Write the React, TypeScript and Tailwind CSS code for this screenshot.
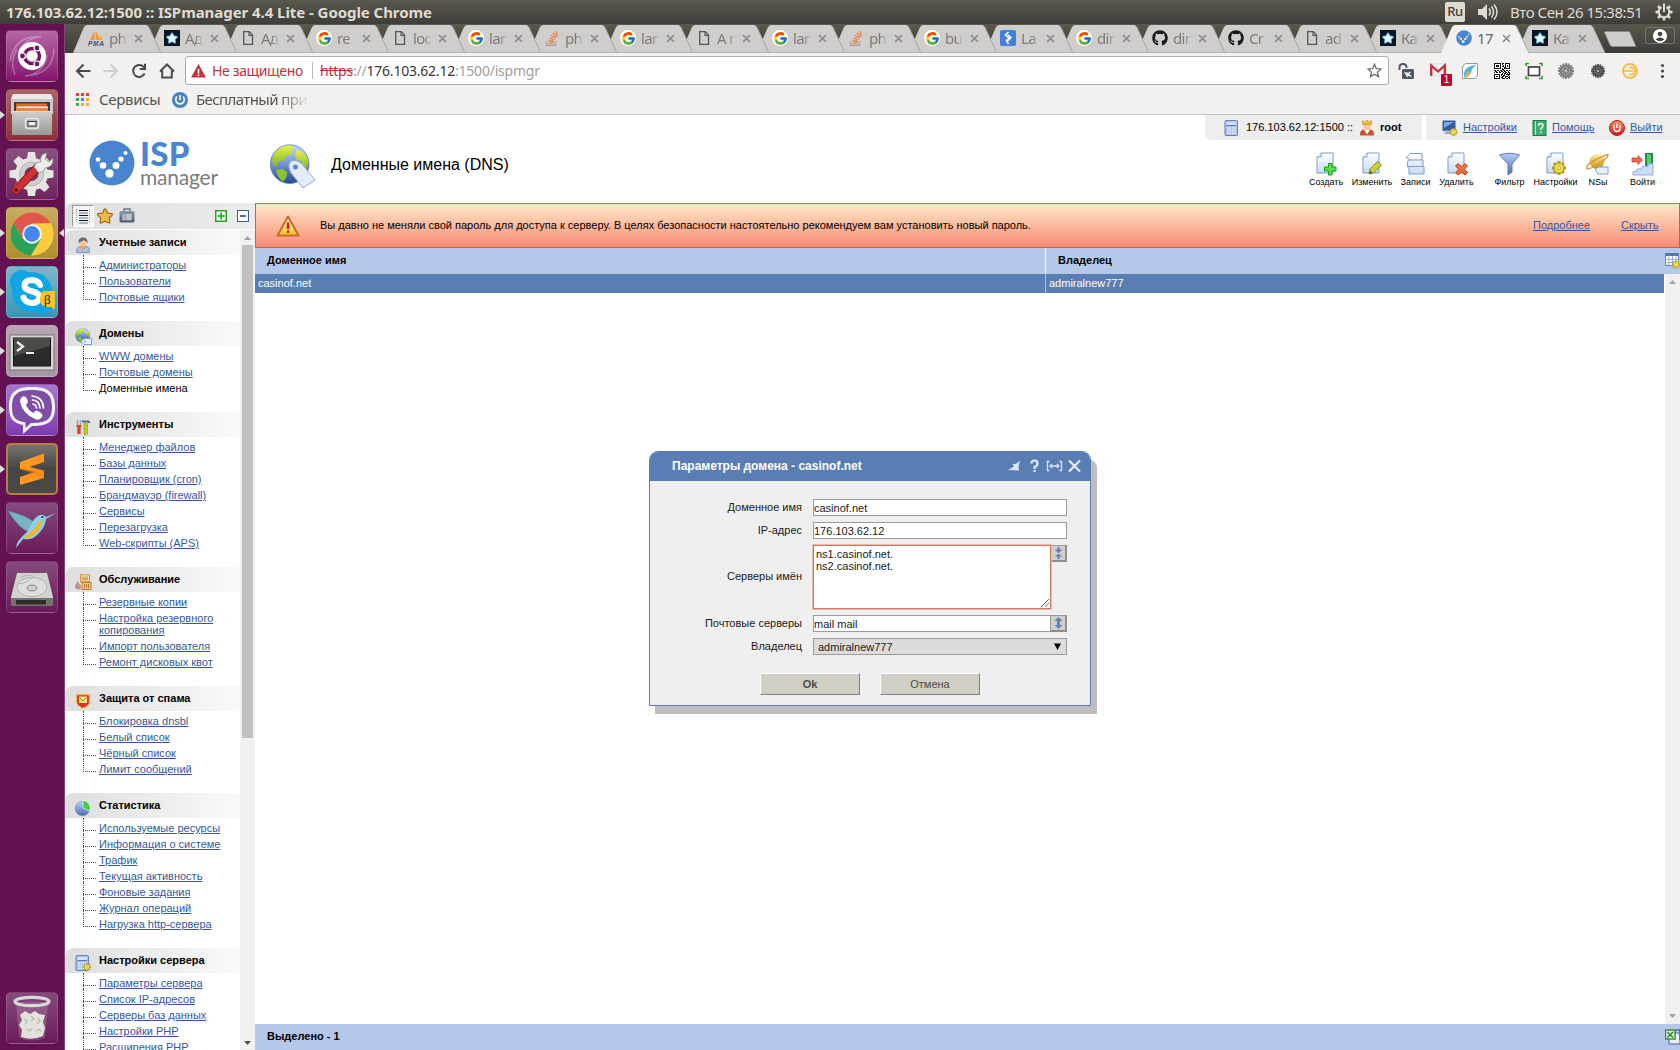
import React from "react";
import { FcGoogle } from "react-icons/fc";
import { FaGithub, FaStackOverflow, FaStar } from "react-icons/fa";

type Kids = { children?: React.ReactNode };

/* ---------- shared gradients ---------- */
const grads: [string, string, string][] = [
  ["gPage", "#ffffff", "#c9daf5"],
  ["gBlue", "#b9d0f6", "#4a6cb8"],
  ["gGlobe", "#c4dcff", "#24489c"],
  ["gLime", "#e6f04a", "#7cb822"],
  ["gRed", "#ff8f70", "#c81818"],
  ["gGold", "#fff2a8", "#c98a14"],
  ["gWarn", "#fffbd0", "#f2c21c"],
  ["gMetal", "#fdfdfd", "#9a9a9a"],
  ["gDrawer", "#cfcfcd", "#979795"],
  ["gGray", "#8f9aa8", "#4f5a69"],
];
const Defs = () => (
  <svg className="absolute h-0 w-0">
    <defs>
      {grads.map(([id, a, b]) => (
        <linearGradient key={id} id={id} x1="0" y1="0" x2="0" y2="1">
          <stop offset="0" stopColor={a} />
          <stop offset="1" stopColor={b} />
        </linearGradient>
      ))}
    </defs>
  </svg>
);

const I = ({ s = 16, v = 16, children }: Kids & { s?: number; v?: number }) => (
  <svg width={s} height={s} viewBox={`0 0 ${v} ${v}`} className="shrink-0 overflow-visible">
    {children}
  </svg>
);

/* ---------- tab icons ---------- */
const IspDot = ({ s = 16 }: { s?: number }) => (
  <I s={s} v={46}>
    <circle cx="23" cy="23" r="22.500" fill="#4a86cf" />
    <g fill="#fff">
      <circle cx="9" cy="19.500" r="2.300" />
      <circle cx="14" cy="25.500" r="3.300" />
      <circle cx="20.500" cy="33.500" r="4.200" />
      <circle cx="27" cy="25.500" r="3.500" />
      <circle cx="32" cy="19" r="2.600" />
      <circle cx="36.500" cy="13" r="2" />
    </g>
  </I>
);
const PageFav = () => (
  <I>
    <path d="M3.700 1.700h5.600l3.200 3.200v9.400H3.700z" fill="none" stroke="#555" strokeWidth="1.300" />
    <path d="M9 2v3.300h3.300" fill="none" stroke="#555" strokeWidth="1.200" />
  </I>
);
const StarFav = () => (
  <span className="flex h-4 w-4 items-center justify-center bg-[#0b1420]">
    <FaStar size={12} color="#e6f7ff" stroke="#3aa4e0" strokeWidth={40} />
  </span>
);
const GFav = () => (
  <span className="flex h-4 w-4 items-center justify-center rounded-full bg-white">
    <FcGoogle size={15} />
  </span>
);
const PmaFav = () => (
  <I>
    <path d="M2 10Q4 4 6.500 2v8zM7.500 10V1q4 4 3.500 9zM11.500 10l1-5q1.500 3 1.500 5z" fill="#f39a35" />
    <text x="0" y="15.800" fontSize="6.500" fontWeight="bold" fontStyle="italic" fill="#4a4a78" fontFamily="Liberation Sans" textLength="16">
      PMA
    </text>
  </I>
);
const LaFav = () => (
  <I>
    <rect width="16" height="16" rx="2" fill="#4281d8" />
    <path d="M8.500 2L5.500 5l3.500 3-3 3M8 5l3 2.500L7 11.500 8.500 14" fill="none" stroke="#fff" strokeWidth="1.500" />
  </I>
);
/* fanned sheets above an open tray */
const SoFav = () => (
  <I>
    <path d="M2.500 11.500V15.300H11.500V11.500" fill="none" stroke="#a8a19a" strokeWidth="1.300" />
    <path d="M4.300 13.200H9.800M4.400 10.700l5.500.8M5.200 8l5.200 2M6.800 5.200l4.500 3.400M9 2.700l3.300 4.500M12 1l1.300 5.300" stroke="#e8803c" strokeWidth="1.300" fill="none" />
  </I>
);
const favs: Record<string, React.ReactNode> = {
  pma: <PmaFav />,
  star: <StarFav />,
  page: <PageFav />,
  g: <GFav />,
  so: <SoFav />,
  la: <LaFav />,
  gh: <FaGithub size={16} color="#1b1b1b" />,
  isp: <IspDot />,
};
const tabs: [string, string][] = [
  ["pma", "ph"], ["star", "Ад"], ["page", "Ад"], ["g", "re"], ["page", "loc"], ["g", "lar"], ["so", "ph"],
  ["g", "lar"], ["page", "A r"], ["g", "lar"], ["so", "ph"], ["g", "bu"], ["la", "La"], ["g", "dir"],
  ["gh", "dir"], ["gh", "Cr"], ["page", "ad"], ["star", "Ка"], ["isp", "17"], ["star", "Ка"],
];

const Tab = ({ i, icon, text }: { i: number; icon: string; text: string }) => {
  const active = icon === "isp";
  const bg = active ? "#f2f1f0" : "#d0cecd";
  return (
    <div className="relative -mr-3 flex h-[28px] w-[88px] shrink-0 items-center pb-[2px] pl-[15px]" style={{ zIndex: active ? 40 : 30 - i }}>
      <svg className="absolute inset-0" width="88" height="28">
        <path d="M0 28L10.500 3Q12 0 14 0H73Q75 0 76 2.500L88 28Z" fill={bg} />
        <path d="M75.500 1.500L88 28" stroke="#aaa8a6" fill="none" />
        {!active && <path d="M0 27.500H88" stroke="#b3b1af" />}
      </svg>
      <div className="relative flex w-4 shrink-0">{favs[icon]}</div>
      <span
        className={`relative ml-[5px] w-[19px] overflow-hidden text-[15px] leading-5 tracking-[-0.7px] whitespace-nowrap ${
          active ? "text-[#666]" : "text-[#7d7a77] [mask-image:linear-gradient(to_right,#000_55%,transparent)]"
        }`}
      >
        {text}
      </span>
      <svg className="relative ml-[6px]" width="9" height="9">
        <path d="M1 1l7 7M8 1l-7 7" stroke="#8b8886" strokeWidth="1.600" />
      </svg>
    </div>
  );
};

/* ---------- launcher ---------- */
const Tile = ({ bg, left, right, children }: Kids & { bg: string; left?: boolean; right?: boolean }) => (
  <div className={`relative flex h-[52px] w-[52px] shrink-0 items-center justify-center rounded-[5px] border border-white/15 ${bg}`}>
    {children}
    {left && (
      <svg className="absolute top-[21px] -left-[7px]" width="5" height="8">
        <path d="M0 0L5 4L0 8z" fill="#ddd" />
      </svg>
    )}
    {right && (
      <svg className="absolute top-[21px] -right-[7px]" width="5" height="8">
        <path d="M5 0L0 4L5 8z" fill="#ddd" />
      </svg>
    )}
  </div>
);

const gearTeeth = [0, 45, 90, 135, 180, 225, 270, 315];

const Launcher = () => (
  <div className="flex w-[65px] shrink-0 flex-col gap-[7px] border-r border-[#83487a] bg-[#641152] pt-[6px] pb-[6px] pl-[6px]">
    <Tile bg="bg-gradient-to-b from-[#b565a6] to-[#86106f]">
      <I s={50} v={50}>
        <path d="M3 30Q8 4 34 6Q20 6 12 20M47 18Q46 44 18 45Q38 42 40 24M8 44Q2 30 10 18" fill="none" stroke="#fff" strokeOpacity=".3" strokeWidth="1.500" />
        <circle cx="25" cy="25" r="14" fill="#fff" />
        <circle cx="25" cy="25" r="7.500" fill="none" stroke="#7a1560" strokeWidth="3.400" />
        <g fill="#7a1560" stroke="#fff" strokeWidth="1.200">
          <circle cx="15.500" cy="25" r="3" />
          <circle cx="30" cy="17" r="3" />
          <circle cx="30" cy="33" r="3" />
        </g>
      </I>
    </Tile>
    <Tile bg="bg-gradient-to-b from-[#a8646b] to-[#8c2f3b]" left>
      <I s={50} v={50}>
        <path d="M6 4H44L46 10V24H4V10z" fill="#c9c9c7" />
        <path d="M6 4H44L46 9H4z" fill="#e9e9e7" />
        <path d="M7 12H43V24H7z" fill="#3d3a37" />
        <path d="M9 13.500H40V18H9z" fill="#d8702b" />
        <path d="M10 16.500H41V20H10z" fill="#f4efe6" />
        <path d="M9 18H41V24H9z" fill="#e98740" />
        <path d="M5 21H45V45H5z" fill="url(#gDrawer)" />
        <path d="M5 21.500H45" stroke="#e2e2e0" />
        <rect x="18.500" y="28.500" width="13" height="10" rx="2" fill="#b5b5b3" stroke="#e6e6e4" strokeWidth="1.500" />
        <rect x="21" y="31.500" width="8" height="4.500" fill="#f4f4f4" stroke="#333" />
      </I>
    </Tile>
    <Tile bg="bg-gradient-to-b from-[#8a5081] to-[#70225f]">
      <I s={50} v={50}>
        <g fill="#e5e5e3">
          {gearTeeth.map((a) => (
            <path key={a} d="M19.500 13L21 3H28L29.500 13z" transform={`rotate(${a} 24.500 25)`} />
          ))}
          <circle cx="24.500" cy="25" r="16.500" />
        </g>
        <circle cx="24.500" cy="25" r="12" fill="#cfcfcd" stroke="#b5b5b3" />
        <circle cx="24.500" cy="25" r="7" fill="#76396c" />
        <path d="M9 41L31 18" stroke="#8d1a1a" strokeWidth="8.500" strokeLinecap="round" />
        <path d="M9 41L31 18" stroke="#cf3434" strokeWidth="6.500" strokeLinecap="round" />
        <path d="M27 18Q29 12 34 13Q32 5 40 4L38 10L42 13L46 9Q47 18 38 19Q37 23 32 24z" fill="#eeeeec" stroke="#8a8a88" strokeWidth=".8" />
        <circle cx="9" cy="41" r="1.800" fill="#5a0d0d" />
      </I>
    </Tile>
    <Tile bg="bg-gradient-to-b from-[#c9ab62] to-[#b08e28]" left right>
      <I s={50} v={50}>
        <circle cx="25" cy="26" r="21.500" fill="#fc4" />
        <path d="M6.400 15.250A21.500 21.500 0 0 1 43.600 15.250L25 16L16 31z" fill="#e2574c" />
        <path d="M6.400 15.250A21.500 21.500 0 0 0 24 47.500L34 31L16 31z" fill="#2aa35a" />
        <path d="M43.600 15.600H25L35 30L25 47.500A21.500 21.500 0 0 0 43.600 15.600z" fill="#fdcb3f" />
        <circle cx="25" cy="26" r="9.700" fill="#fff" />
        <circle cx="25" cy="26" r="7.900" fill="#4587f0" />
      </I>
    </Tile>
    <Tile bg="bg-gradient-to-b from-[#7cb6c8] to-[#3596b4]" left>
      <I s={50} v={50}>
        <circle cx="15" cy="15" r="12" fill="#12a5e6" />
        <circle cx="35" cy="36" r="11" fill="#12a5e6" />
        <circle cx="25" cy="25" r="20" fill="#12a5e6" />
        <path d="M33 18Q31 13 24.500 13Q17.500 13.500 17.500 18.500C17.500 26 32.500 22.500 32.500 30.500Q31.500 36 25 36Q18 35.500 16.500 30.500" fill="none" stroke="#fff" strokeWidth="6" strokeLinecap="round" />
        <path d="M37 24H48V40Q47 45 45 40H39Q32 38 33 31Q34 25 37 24z" fill="#f6c32c" />
        <text x="37" y="37" fontSize="13" fontFamily="Liberation Serif" fill="#222">β</text>
      </I>
    </Tile>
    <Tile bg="bg-gradient-to-b from-[#b8a4b4] to-[#a798a4]" left>
      <I s={50} v={50}>
        <rect x="3" y="9" width="44" height="35" fill="#d6d6d4" stroke="#777" />
        <rect x="6.500" y="12" width="37" height="28" fill="#2b2b29" stroke="#111" />
        <path d="M7 12H43V20L7 30z" fill="#4b4b48" />
        <path d="M10 16l6 4.500-6 4.500M19 27h8" fill="none" stroke="#eee" strokeWidth="2.200" />
      </I>
    </Tile>
    <Tile bg="bg-gradient-to-b from-[#a678cc] to-[#7d3bb0]" left>
      <I s={50} v={50}>
        <path d="M25 2C41 2 48 7 48 22C48 37 41 41 25 41L16 49V40C5 38 2 32 2 22C2 7 9 2 25 2z" fill="#f5f0fa" />
        <path d="M25 5C39 5 45 9 45 22C45 35 39 38 24 38L18.500 43V37.500C8 36 5 32 5 22C5 9 11 5 25 5z" fill="#7f4fa8" />
        <path d="M15 12q3-2 5 2 2 4-1 5.500 2 6 7.500 8.500 2-3.500 5.500-1.500 5 3 3 5.500-3 4-7 2Q16 29 13 17q-.500-3 2-5z" fill="#fff" />
        <path d="M25 11q11 1 11.500 12M25.500 15q7 .5 7.500 8M26 19q3 .3 3.500 4" fill="none" stroke="#fff" strokeWidth="1.700" strokeLinecap="round" />
      </I>
    </Tile>
    <Tile bg="bg-[#4a4a49] bg-gradient-to-b from-[#797773] via-[#454544] to-[#4a4a49] outline-2 -outline-offset-2 outline-[#b87c45]" left>
      <I s={50} v={50}>
        <path d="M13 18L37 9.500V18L22.500 23L37 26.500V34L13 41V33L27.500 28L13 25z" fill="#ff9721" />
        <path d="M13 25L37 26.500V34z" fill="#e87d0d" opacity=".45" />
      </I>
    </Tile>
    <Tile bg="bg-gradient-to-b from-[#854a7b] to-[#6a1a5a]">
      <I s={50} v={50}>
        <path d="M1 8Q18 12 27 19L24 30Q12 26 1 8z" fill="#79b3c4" stroke="#4b8ba0" strokeWidth=".6" />
        <path d="M26 18Q33 8 39 14L49 10L39 16Q38 24 33 29Q26 38 16 36L9 45Q9 38 20 29z" fill="#8dcfe8" />
        <path d="M35 16Q35 26 26 33Q20 36 16 35Q27 28 30 21z" fill="#f1b52c" />
        <circle cx="35.500" cy="14" r="1" fill="#222" />
      </I>
    </Tile>
    <Tile bg="bg-gradient-to-b from-[#854a7b] to-[#6a1a5a]">
      <I s={50} v={50}>
        <path d="M10 11H40L46 35V43H4V35z" fill="#d2d2d0" />
        <path d="M4 36H46V42Q46 44 44 44H6Q4 44 4 42z" fill="#74746f" />
        <rect x="9" y="38" width="30" height="4.500" fill="#2d2d2b" />
        <ellipse cx="25" cy="25" rx="15" ry="9.500" fill="#dededc" stroke="#b4b4b2" />
        <ellipse cx="25" cy="26" rx="5" ry="3" fill="#ccc" stroke="#8a8a88" />
        <path d="M14 15Q22 12 26 14Q23 20 12 22" fill="none" stroke="#b4b4b2" />
      </I>
    </Tile>
    <div className="mt-auto">
      <Tile bg="bg-gradient-to-b from-[#854a7b] to-[#6a1a5a]">
        <I s={50} v={50}>
          <path d="M9 9L12 45Q25 50 38 45L41 9z" fill="#fff" opacity=".16" />
          <path d="M13 22l5-4 5 3 5-3 4 3 6 1-2 7 2 6-2 8q-11 5-22 1l1-7-3-5 3-5z" fill="#e2e2dd" />
          <path d="M17 26l3 2-2 3M24 23l3 3-3 2M31 25l2 3-3 3M20 36l3 2 2-3M29 38l3-2 2 3" fill="none" stroke="#b9bab3" strokeWidth="1.200" />
          <ellipse cx="25" cy="8.500" rx="17" ry="4.200" fill="none" stroke="#d9d9d7" strokeWidth="3.200" />
        </I>
      </Tile>
    </div>
  </div>
);

/* ---------- system bar ---------- */
const TopPanel = () => (
  <div className="flex h-[24px] shrink-0 items-center bg-gradient-to-b from-[#5b584d] to-[#3e3d38] pr-[7px] pl-[6px] text-[#dfdbd2]">
    <span className="text-[15px] leading-[22px] font-bold tracking-[-0.06px] whitespace-nowrap">
      176.103.62.12:1500 :: ISPmanager 4.4 Lite - Google Chrome
    </span>
    <span className="ml-auto flex h-[20px] w-[20px] items-center justify-center rounded-[2px] bg-[#dfdbd2] text-[13px] font-medium tracking-[-0.5px] text-[#3c3b37]">
      Ru
    </span>
    <svg className="ml-[13px]" width="20" height="18">
      <path d="M0 6h4l5-5v16l-5-5H0z" fill="#dfdbd2" />
      <path d="M11 5.500q2.500 3.500 0 7M13.500 3.500q4 5.500 0 11M16 1.500q6 7.500 0 15" fill="none" stroke="#dfdbd2" strokeWidth="1.500" />
    </svg>
    <span className="ml-[12px] w-[134px] text-[15px] leading-[22px] tracking-[-0.45px] whitespace-nowrap">Вто Сен 26 15:38:51</span>
    <svg className="ml-[11px]" width="18" height="18" viewBox="-9 -9 18 18">
      <g fill="#dfdbd2">
        {[45, 90, 135, 180, 225, 270, 315].map((a) => (
          <rect key={a} x="-1.300" y="-8.500" width="2.600" height="4" transform={`rotate(${a})`} />
        ))}
      </g>
      <path d="M2.500-4.800A5.400 5.400 0 1 1-2.500-4.800" fill="none" stroke="#dfdbd2" strokeWidth="2" />
      <path d="M0-8.500V0" stroke="#dfdbd2" strokeWidth="2" />
    </svg>
  </div>
);

/* ---------- browser toolbar ---------- */
const NavIcon = ({ d, c = "#4c4a48" }: { d: string; c?: string }) => (
  <svg width="16" height="16" viewBox="0 0 16 16" className="mr-[12px] shrink-0 overflow-visible">
    <path d={d} fill="none" stroke={c} strokeWidth="2" />
  </svg>
);
const Gear = ({ c, s = 16 }: { c: string; s?: number }) => (
  <svg width={s} height={s} viewBox="-8 -8 16 16">
    <g fill={c}>
      {gearTeeth.concat([22, 67, 112, 157, 202, 247, 292, 337]).map((a) => (
        <rect key={a} x="-1" y="-8" width="2" height="4" transform={`rotate(${a})`} />
      ))}
      <circle r="6.300" />
    </g>
    <circle r="3.800" fill="none" stroke="#fff" strokeOpacity=".4" strokeDasharray="2 1" />
    <circle r="1.500" fill="#fff" fillOpacity=".5" />
  </svg>
);
const qr = ["1111111011011111", "1000001010010001", "1011101001010101", "1011101011010101", "1000001000110001", "1111111010111111", "0000000011000000", "1101101101101101", "0110010110110010", "1011011001011011", "0000000010110101", "1111110110101111", "1000010101100010", "1011010011011101", "1000010110010011", "1111110011101101"];

const BrowserBars = () => (
  <div className="shrink-0 bg-[#f2f1f0]">
    <div className="flex h-[35px] items-center pl-[10px]">
      <NavIcon d="M15.500 8H2.500M8.500 1.500L2 8l6.500 6.500" />
      <NavIcon d="M.5 8H13.500M7.500 1.500L14 8l-6.500 6.500" c="#cfcdcb" />
      <NavIcon d="M13.600 10.500A6 6 0 1 1 13 4.300M14 .8V6H8.800" />
      <NavIcon d="M1 8.500L8 1.500l7 7M3.200 7.500V14.500h9.600V7.500" />
      <div className="ml-[-2px] flex h-[29px] w-[1204px] items-center rounded-[3px] border border-[#adaaa8] bg-white pr-[6px] pl-[5px] text-[14px] tracking-[-0.22px] text-[#a09e9c]">
        <svg width="15" height="14">
          <path d="M7.500 0L15 13.500H0z" fill="#c1333a" />
          <path d="M7.500 5v4.500M7.500 10.500v1.500" stroke="#fff" strokeWidth="1.600" />
        </svg>
        <span className="ml-[6px] w-[92px] tracking-[-0.36px] whitespace-nowrap text-[#c1333a]">Не защищено</span>
        <span className="ml-[8px] h-[17px] w-px bg-[#bbb]" />
        <span className="ml-[7px] whitespace-nowrap">
          <span className="text-[#c1333a] line-through">https</span>://
          <span className="text-[#3a3836]">176.103.62.12</span>:1500/ispmgr
        </span>
        <svg className="ml-auto" width="15" height="15" viewBox="0 0 24 24">
          <path d="M12 2l3 7 7.500.6-5.700 5 1.800 7.400L12 18l-6.600 4 1.800-7.400-5.700-5L9 9z" fill="none" stroke="#666" strokeWidth="2" />
        </svg>
      </div>
      <div className="ml-[9px] flex gap-[16px]">
        <I>
          <path d="M1.500 7V4q0-3 3.500-3t3.500 3v1" fill="none" stroke="#4f5560" strokeWidth="1.900" />
          <rect x="4" y="6" width="12" height="10" rx="1.500" fill="#4f5560" />
          <path d="M6.500 9l2.500 4V9M9 11l2.500 2M12.500 9L10 11l3.500 2.500" fill="none" stroke="#fff" strokeWidth="1.200" />
        </I>
        <span className="relative">
          <I>
            <rect x="0" y="1" width="16" height="12" fill="#f3f3f3" stroke="#ccc" strokeWidth=".5" />
            <path d="M1.200 13V2.500L8 8.500l6.800-6V13" fill="none" stroke="#d02a35" strokeWidth="2.300" />
          </I>
          <span className="absolute top-[11px] left-[11px] flex h-[12px] w-[11px] items-center justify-center rounded-[1px] bg-[#c5002b] font-['Liberation_Sans'] text-[10px] leading-none text-white">
            1
          </span>
        </span>
        <I>
          <path d="M.5 5Q1 .5 5 .5H15.500V11Q15 15.500 11 15.500H.5z" fill="#fff" stroke="#999" />
          <path d="M2.500 15Q.5 6 7.500 3.500l7-2-4.500 4.500Q9 13 2.500 15z" fill="#4fb3e6" />
          <path d="M4 15Q3 10 7 8q1 4-3 7z" fill="#f2b234" />
        </I>
        <I>
          <rect width="16" height="16" fill="#fff" />
          {qr.map((r, y) => r.split("").map((c, x) => (c === "1" ? <rect key={`${x}-${y}`} x={x} y={y} width="1" height="1" fill="#111" /> : null)))}
        </I>
        <I>
          <rect x="2.500" y="4" width="11" height="8.500" fill="#fff" stroke="#444" strokeWidth="1.700" />
          <path d="M0 3V.5H3M13 .5h3V3M0 13v2.500h3M13 15.500h3V13" fill="none" stroke="#3e9c3a" strokeWidth="1.600" />
        </I>
        <Gear c="#7d7d7d" />
        <span className="flex w-4 items-center justify-center"><Gear c="#4b4b4b" s={14} /></span>
        <I>
          <circle cx="8" cy="8" r="7" fill="none" stroke="#f7b93a" strokeWidth="1.800" />
          <path d="M1 8h7M7 4.500h2.500a3.500 3.500 0 0 1 0 7H7M7 8h4" fill="none" stroke="#f7b93a" strokeWidth="1.700" />
        </I>
        <svg width="16" height="16">
          <g fill="#4c4a48"><circle cx="8.500" cy="2.500" r="1.600" /><circle cx="8.500" cy="8" r="1.600" /><circle cx="8.500" cy="13.500" r="1.600" /></g>
        </svg>
      </div>
    </div>
    <div className="flex h-[27px] items-center border-b border-[#c9c7c5] pb-[3px] pl-[11px] text-[15px] text-[#57534f]">
      <svg width="13" height="13">
        {["#dd4343", "#dd4343", "#dd4343", "#45a35a", "#4285f4", "#e8b13c", "#45a35a", "#e8b13c", "#e8b13c"].map((c, i) => (
          <rect key={i} x={(i % 3) * 5} y={Math.floor(i / 3) * 5} width="3" height="3" fill={c} />
        ))}
      </svg>
      <span className="ml-[10px] w-[73px] tracking-[-0.3px]">Сервисы</span>
      <I>
        <circle cx="8" cy="8" r="8" fill="#4a83c4" />
        <path d="M5 4.500a4.300 4.300 0 1 0 6 0M8 3v5" fill="none" stroke="#fff" strokeWidth="1.600" />
      </I>
      <span className="ml-[8px] w-[116px] overflow-hidden tracking-[-0.6px] whitespace-nowrap [mask-image:linear-gradient(to_right,#000_72%,transparent_98%)]">
        Бесплатный при
      </span>
    </div>
  </div>
);

/* ---------- panel icons ---------- */
const IcoPerson = () => (
  <I>
    <path d="M1.500 15.500Q1 10 5 9.500H11Q15 10 14.500 15.500z" fill="#a9c0ea" stroke="#5f80c0" strokeWidth=".7" />
    <path d="M5 9.500L8 14l3-4.500z" fill="#f4a33a" />
    <circle cx="8" cy="5.800" r="3.800" fill="#f2c59c" />
    <path d="M3.500 6Q3 .5 8 .5T12.500 6Q10 2.500 8 3.500T3.500 6z" fill="#6d6a67" />
  </I>
);
const Globe = ({ s = 16 }: { s?: number }) => (
  <I s={s}>
    <circle cx="7.700" cy="7.500" r="7.200" fill="url(#gGlobe)" stroke="#5a7cbb" strokeWidth=".3" />
    <path d="M1.600 4Q4.500 0 8.500.7Q10 1.200 8.200 2.200L8.800 3.600L6.500 4.300L5.500 6L3.600 6.500L2.600 8.500Q.5 7 1.600 4z" fill="url(#gLime)" />
    <path d="M10.200 2.200Q13 2.500 14.300 5.200Q14.800 7.500 13.800 9.500L12.500 8L12 6.200L10.400 6L9.600 4.400z" fill="url(#gLime)" />
    <path d="M2.600 9.600L5 9.200L6.800 10.600L6.400 12.400L5.300 14Q3 12.600 2.600 9.600z" fill="#8cc42a" />
  </I>
);
const IcoDomain = () => (
  <span className="relative block h-4 w-4">
    <Globe />
    <svg className="absolute right-[-1px] bottom-[-1px]" width="11" height="7">
      <path d="M0 3.500L3 .5h7.500v6H3z" fill="#e8f0ff" stroke="#7e9cd6" />
      <circle cx="4" cy="3.500" r=".8" fill="#4a6cb8" />
    </svg>
  </span>
);
const IcoTools = () => (
  <I>
    <path d="M2.500 1v6M5.500 1v6" stroke="#8fa3c8" strokeWidth="1.500" />
    <path d="M1.500 7h1.800v8M6.500 7H4.700v8" fill="none" stroke="#d9462f" strokeWidth="2" />
    <path d="M7 1.500h7l1.500 2.500h-2l-1-.5H7z" fill="#596474" />
    <rect x="9" y="4.500" width="3.500" height="11" fill="#b8c628" stroke="#8a951a" strokeWidth=".5" />
  </I>
);
const IcoBoxes = () => (
  <I>
    <rect x="5.500" y=".8" width="9" height="7" fill="#fbe0a4" stroke="#cf9440" />
    <rect x="7" y="8.500" width="9" height="7" fill="#f3c880" stroke="#bd7a2c" />
    <path d="M8 2.500v4M10 2.500v4M12 2.500v4M9.500 10v4M11.500 10v4M13.500 10v4" stroke="#b5752e" />
    <path d="M0 13q0-3 2-4V7.500h1.500V9q2.500 1 2.500 4t-3 2.500T0 13z" fill="#b99a86" />
  </I>
);
const IcoShield = () => (
  <I>
    <path d="M1.500 1.500h13v8Q14 13 8 15.500 2 13 1.500 9.500z" fill="#dc3528" stroke="#e9c34a" strokeWidth="1.300" />
    <rect x="4" y="3.500" width="8" height="6.500" fill="#f6e78e" />
    <path d="M4.500 4.500L8 8l3.500-3.500" fill="none" stroke="#8a7a1a" />
  </I>
);
const IcoPie = () => (
  <I>
    <circle cx="7.500" cy="8.500" r="7.300" fill="url(#gBlue)" stroke="#6682bb" strokeWidth=".5" />
    <path d="M8 .5A7.500 7.500 0 0 1 14.500 11L8 8z" fill="#3fd338" stroke="#fff" strokeWidth=".6" />
  </I>
);
const Calc = () => (
  <>
    <rect x="1" y=".5" width="12.500" height="15" rx="1" fill="#a9bfe8" stroke="#6683c0" />
    <rect x="2.500" y="2" width="9.500" height="3" fill="#d4e1fb" />
    <path d="M2.500 5.500h9.500" stroke="#5b78b5" />
    <g fill="#f0f5ff">
      {[3, 5.500, 8, 10.500].map((x) => [7.2, 9.8, 12.4].map((y) => <rect key={`${x}${y}`} x={x} y={y} width="1.500" height="1.600" />))}
    </g>
  </>
);
const MiniGear = ({ x, y, s = 1 }: { x: number; y: number; s?: number }) => (
  <g transform={`translate(${x} ${y}) scale(${s})`}>
    {gearTeeth.map((a) => (
      <rect key={a} x="-1" y="-4.500" width="2" height="3" fill="#b89a20" transform={`rotate(${a})`} />
    ))}
    <circle r="3.200" fill="#efe04a" stroke="#b39a1c" strokeWidth=".6" />
    <circle r="1.100" fill="#fff" stroke="#b39a1c" strokeWidth=".5" />
  </g>
);
const IcoCalcGear = () => (
  <I><Calc /><MiniGear x={12} y={12} s={0.9} /></I>
);

/* ---------- side menu ---------- */
type Group = { title: string; icon: React.ReactNode; items: string[] };
const groups: Group[] = [
  { title: "Учетные записи", icon: <IcoPerson />, items: ["Администраторы", "Пользователи", "Почтовые ящики"] },
  { title: "Домены", icon: <IcoDomain />, items: ["WWW домены", "Почтовые домены", "Доменные имена"] },
  { title: "Инструменты", icon: <IcoTools />, items: ["Менеджер файлов", "Базы данных", "Планировщик (cron)", "Брандмауэр (firewall)", "Сервисы", "Перезагрузка", "Web-скрипты (APS)"] },
  { title: "Обслуживание", icon: <IcoBoxes />, items: ["Резервные копии", "Настройка резервного копирования", "Импорт пользователя", "Ремонт дисковых квот"] },
  { title: "Защита от спама", icon: <IcoShield />, items: ["Блокировка dnsbl", "Белый список", "Чёрный список", "Лимит сообщений"] },
  { title: "Статистика", icon: <IcoPie />, items: ["Используемые ресурсы", "Информация о системе", "Трафик", "Текущая активность", "Фоновые задания", "Журнал операций", "Нагрузка http-сервера"] },
  { title: "Настройки сервера", icon: <IcoCalcGear />, items: ["Параметры сервера", "Список IP-адресов", "Серверы баз данных", "Настройки PHP", "Расширения PHP", ""] },
];

const Arrow = ({ up, c }: { up?: boolean; c: string }) => (
  <svg width="7" height="4" className="shrink-0">
    <path d={up ? "M0 4L3.500 0L7 4z" : "M0 0L3.500 4L7 0z"} fill={c} />
  </svg>
);

const Sidebar = () => (
  <div className="flex w-[190px] shrink-0 flex-col overflow-hidden">
    <div className="flex h-[26px] shrink-0 items-center rounded-tl-[8px] bg-gradient-to-r from-[#dedede] to-[#ececec] pl-[7px]">
      <span className="flex h-[22px] w-[22px] items-center justify-center border border-[#9a9a9a] border-r-white border-b-white bg-[#f4f4f4]">
        <svg width="16" height="16">
          <path d="M1.500 1v14M14.500 1v14" stroke="#999" strokeDasharray="1 1" />
          <path d="M4 2.500h9M4 7.500h9M4 12.500h9" stroke="#111" strokeWidth="1.200" />
          <path d="M4 5h9M4 10h9M4 15h9" stroke="#5f7296" strokeWidth="1" />
        </svg>
      </span>
      <span className="ml-[3px]"><FaStar size={16} color="#f0bb45" stroke="#a06a1c" strokeWidth={45} className="overflow-visible" /></span>
      <span className="ml-[6px]">
        <I>
          <path d="M5 3V1h6v2" fill="none" stroke="#6d7a8c" strokeWidth="1.500" />
          <rect x=".5" y="3" width="15" height="11.500" rx="1.500" fill="url(#gGray)" />
          <rect x="3" y="5.500" width="10" height="7" fill="#8694a8" />
          <path d="M3.500 7h2M6.500 7h6M3.500 9h2M6.500 9h6M3.500 11h2M6.500 11h6" stroke="#eef" />
        </I>
      </span>
      <svg width="12" height="12" className="ml-[80px]">
        <rect x=".75" y=".75" width="10.500" height="10.500" fill="#fff" stroke="#2f9a2a" strokeWidth="1.500" />
        <path d="M6 2.500v7M2.500 6h7" stroke="#3cb62e" strokeWidth="2.200" />
      </svg>
      <svg width="12" height="12" className="ml-[10px]">
        <rect x=".5" y=".5" width="11" height="11" fill="#fff" stroke="#3d5796" />
        <path d="M3 6h6" stroke="#3d5796" strokeWidth="1.800" />
      </svg>
    </div>
    <div className="mt-px flex min-h-0 flex-1">
      <div className="w-[175px] overflow-hidden text-[11px] leading-[12px]">
        {groups.map((g) => (
          <div key={g.title} className="pb-[18px]">
            <div className="flex h-[25px] items-center rounded-tl-[8px] bg-gradient-to-r from-[#dedede] to-[#fafafa] pl-[10px] font-bold">
              <span className="mt-[4px] w-4">{g.icon}</span>
              <span className="ml-[8px] pb-[2px] whitespace-nowrap">{g.title}</span>
            </div>
            {g.items.map((t, i) => (
              <div key={t} className="flex min-h-[16px]">
                <div className="relative ml-[18px] w-[16px] shrink-0">
                  <div className={`absolute top-0 left-0 border-l border-dotted border-[#33508c] ${i < g.items.length - 1 ? "h-full" : "h-[13px]"}`} />
                  <div className="h-[13px] w-[13px] border-b border-dotted border-[#33508c]" />
                </div>
                <a className={`w-[136px] pt-[4px] ${t === "Доменные имена" ? "text-black" : "text-[#33589f] underline"}`}>{t}</a>
              </div>
            ))}
          </div>
        ))}
      </div>
      <div className="flex w-[15px] shrink-0 flex-col items-center bg-[#f1f1f1] pt-[6px] pb-[5px]">
        <Arrow up c="#a0a0a0" />
        <div className="mt-[5px] h-[493px] w-[11px] bg-[#c1c1c1]" />
        <div className="mt-auto"><Arrow c="#505050" /></div>
      </div>
    </div>
  </div>
);

/* ---------- page header ---------- */
const SheetFold = () => (
  <>
    <path d="M7 1H19V21H3V5z" fill="url(#gPage)" stroke="#7f9bcf" strokeWidth="1" />
    <path d="M7 1V5H3" fill="#fff" stroke="#7f9bcf" />
  </>
);
const tools: [string, string, React.ReactNode][] = [
  ["Создать", "w-[46px]", <><SheetFold /><path d="M14.500 11.500h3.500v3.500h4v4h-4v4h-3.500v-4h-4v-4h4z" fill="#5be04a" stroke="#169a1c" /></>],
  ["Изменить", "w-[46px]", <><SheetFold /><path d="M9 22l1-5 7.500-7.500 4 3.500-8 8z" fill="#c9d036" stroke="#858c14" /><path d="M9 22l1-3.500 2.500 2.500z" fill="#555" /></>],
  ["Записи", "w-[41px]", <path d="M6 1.500H18V8H19V14.500H20V22H5V17L3.500 14.500V9.500L6 8L2 5.500z M5 8H18M4 14.500H19" fill="url(#gPage)" stroke="#7f9bcf" />],
  ["Удалить", "w-[41px]", <><SheetFold /><path d="M10.500 14l2.500-2.500 3.500 3.500 3.500-3.500 2.500 2.500-3.500 3.500 3.500 3-2.500 2.500-3.500-3-3.500 3-2.500-2.500 3.500-3z" fill="#f0703c" stroke="#c23a14" /></>],
  ["Фильтр", "w-[65px]", <path d="M1.500 3Q11.500-.5 21.500 3L14 12V20l-4 3V12z" fill="url(#gBlue)" stroke="#6079b5" />],
  ["Настройки", "w-[27px]", <><SheetFold /><MiniGear x={15} y={16} s={1.550} /></>],
  ["NSы", "w-[58px]", <><circle cx="11" cy="9.500" r="7.500" fill="url(#gGold)" /><path d="M1 17Q-1 13 9 8T22 2.500Q23 5 14 11T1 17z" fill="none" stroke="#d4a43a" strokeWidth="1.500" /><path d="M9 18l3-3h10v7H12z" fill="#e8f0ff" stroke="#7e9cd6" /></>],
  ["Войти", "w-[31px]", <><rect x="14" y="1" width="8" height="13" fill="#22944a" /><path d="M16 2l4 1v12l-4-2z" fill="#58c877" /><path d="M1 6h6V3.500l4.500 4.500-4.500 4.500V10H1z" fill="#ef6a50" stroke="#b83420" strokeWidth=".7" /><path d="M2 23v-3.500h4v-2.500h5v-2.500h6V12h5v11z" fill="#cfdcf7" stroke="#98aede" /></>],
];

const TopLink = ({ children }: Kids) => <a className="text-[#33589f] underline">{children}</a>;

const PageHeader = () => (
  <div className="flex h-[88px] shrink-0">
    <div className="flex w-[190px] items-start pt-[25px] pl-[24px]">
      <IspDot s={46} />
      <div className="ml-[5px] flex flex-col font-['Lato']">
        <span className="mt-[1px] text-[33px] leading-[24px] font-black tracking-[0.3px] text-[#4a86cf]">ISP</span>
        <span className="mt-[2px] text-[21px] leading-[20px] tracking-[-0.2px] text-[#7c7c7c]">manager</span>
      </div>
    </div>
    <div className="flex items-center pt-[12px] pl-[14px]">
      <div className="relative h-[47px] w-[48px] pt-[2px]">
        <Globe s={43} />
        <svg className="absolute top-[17px] left-[19px]" width="28" height="30">
          <path d="M1 9Q0 2 6 1.500Q10 1 14 5L27 21L15 29L3 14z" fill="#e3ecfb" stroke="#93a9d6" />
          <circle cx="7.500" cy="8" r="2.800" fill="#5f7fc0" stroke="#cdd9f0" />
        </svg>
      </div>
      <h1 className="ml-[14px] text-[16px]">Доменные имена (DNS)</h1>
    </div>
    <div className="ml-auto flex flex-col items-end">
      <div className="flex gap-[4px] text-[11px] whitespace-nowrap">
        <div className="flex h-[25px] w-[217px] items-center rounded-bl-[6px] bg-[#eeeeee] pl-[19px]">
          <I><Calc /></I>
          <span className="ml-[6px] w-[113px]">176.103.62.12:1500 ::</span>
          <I s={16}>
            <path d="M1 15.500Q.5 9.500 5 9.500h6q4.500 0 4 6z" fill="#cf4f2e" />
            <path d="M5 9.500l3 5 3-5z" fill="#fff" />
            <circle cx="8" cy="6.500" r="3.500" fill="#f4c79b" />
            <path d="M3.500 4.500V.5l2.300 1.700L8 0l2.200 2.200L12.500.5v4z" fill="#f4c030" stroke="#bd8a18" strokeWidth=".6" />
          </I>
          <b className="ml-[5px]">root</b>
        </div>
        <div className="flex h-[25px] w-[254px] items-center bg-[#eeeeee] pl-[16px]">
          <I>
            <rect x=".5" y=".5" width="13" height="10.500" rx="1" fill="#335a9c" stroke="#8aa4d0" />
            <path d="M2 2h10L2 8z" fill="#7ca6e8" />
            <path d="M4 12h6v2H2z" fill="#8aa4d0" />
            <MiniGear x={11.5} y={12} s={0.9} />
          </I>
          <span className="ml-[5px] w-[69px]"><TopLink>Настройки</TopLink></span>
          <I>
            <rect x="1" y=".5" width="13" height="15" fill="#3dab70" stroke="#1f7a48" />
            <path d="M3.500 1v14" stroke="#bfe9cf" />
            <path d="M6.500 6q0-2.500 2.300-2.500T11 5.500 8.800 8.500V10M8.800 11.500v1.500" fill="none" stroke="#e8ffee" strokeWidth="1.400" />
          </I>
          <span className="ml-[4px] w-[57px]"><TopLink>Помощь</TopLink></span>
          <I>
            <circle cx="8" cy="8" r="7.500" fill="url(#gRed)" stroke="#b51c1c" />
            <path d="M5 5v3.500a3 3 0 0 0 6 0V5M8 3.500V8" fill="none" stroke="#fff" strokeWidth="1.400" />
          </I>
          <span className="ml-[5px]"><TopLink>Выйти</TopLink></span>
        </div>
      </div>
      <div className="mt-[12px] mr-[22px] flex text-[9px] leading-[12px]">
        {tools.map(([t, w, ic]) => (
          <div key={t} className={`flex flex-col items-center whitespace-nowrap ${w}`}>
            <I s={24} v={24}>{ic}</I>
            <span>{t}</span>
          </div>
        ))}
      </div>
    </div>
  </div>
);

/* ---------- dialog ---------- */
const Label = ({ children }: Kids) => <span className="w-[152px] pb-[2px] text-right">{children}</span>;
const Field = ({ children }: Kids) => (
  <div className="ml-[11px] flex h-[17px] w-[254px] items-center border border-[#9b9b9b] bg-white pt-px">{children}</div>
);
const SpinBtn = ({ d }: { d: string }) => (
  <span className="flex h-[17px] w-[16px] shrink-0 items-center justify-center border-t border-r-2 border-b-2 border-t-[#999] border-r-[#8e8e8e] border-b-[#8e8e8e] bg-[#d4d0c8]">
    <svg width="9" height="12"><path d={d} fill="#5e80c4" /></svg>
  </span>
);

const Dialog = () => (
  <div className="absolute top-[451px] left-[649px] h-[255px] w-[442px] rounded-t-[9px] border border-[#5a7db3] bg-[#efefef] text-[11px] leading-[12px] text-[#1a1a1a] shadow-[6px_8px_0_#bfbfbf]">
    <div className="flex h-[29px] items-center rounded-t-[8px] bg-[#5a7db3] pr-[3px] pb-[2px] pl-[22px] text-[12px] font-bold text-white">
      <span className="mr-auto">Параметры домена - casinof.net</span>
      <svg width="80" height="16">
        <path d="M1 12L12 12.500L11.500 8.500L13 2.500L9.500 5.500L5.500 6.500L7 8.500z" fill="#dbe6fa" />
        <path d="M24.500 5.500q0-3 3-3t3 2.800-3 3.700V11M27.500 12v2" fill="none" stroke="#e4ecfb" strokeWidth="2.200" />
        <path d="M42.500 3.500h-2v9h2M52.500 3.500h2v9h-2M43 8h9M45 6l-2 2 2 2M50 6l2 2-2 2" fill="none" stroke="#dbe6fa" strokeWidth="1.300" />
        <path d="M62 2.500l11 11M73 2.500L62 13.500" stroke="#f0f4ff" strokeWidth="2" />
      </svg>
    </div>
    <div className="flex flex-col gap-[6px] pt-[18px]">
      <div className="flex items-center"><Label>Доменное имя</Label><Field>casinof.net</Field></div>
      <div className="flex items-center"><Label>IP-адрес</Label><Field>176.103.62.12</Field></div>
      <div className="flex items-center">
        <Label>Серверы имён</Label>
        <div className="relative ml-[11px] h-[64px] w-[238px] border border-[#c47a62] bg-white pt-[2px] pl-[2px] whitespace-pre shadow-[0_0_0_1px_#eeb9a6]">
          {"ns1.casinof.net.\nns2.casinof.net."}
          <svg className="absolute right-[1px] bottom-[1px]" width="8" height="8">
            <path d="M0 8L8 0M4 8L8 4" stroke="#555" strokeWidth=".9" />
          </svg>
        </div>
        <div className="self-start"><SpinBtn d="M3.500 0h2v2.500h3L4.500 6.200.5 2.500h3zM3.500 12h2V9.500h3L4.500 6.800.5 9.500h3z" /></div>
      </div>
      <div className="flex items-center">
        <Label>Почтовые серверы</Label>
        <div className="ml-[11px] flex h-[17px] w-[238px] items-center border border-[#9b9b9b] bg-white pt-px">mail mail</div>
        <SpinBtn d="M4.500 0l4 4h-2.500v4h2.500l-4 4-4-4h2.500V4H.5z" />
      </div>
      <div className="flex items-center">
        <Label>Владелец</Label>
        <div className="ml-[11px] flex h-[17px] w-[254px] items-center justify-between border border-[#9b9b9b] bg-[#dcdcdc] pt-px pr-[5px] pl-[4px]">
          <span>admiralnew777</span>
          <svg width="7" height="7" className="mb-[2px]"><path d="M0 .5h7L3.500 7z" fill="#000" /></svg>
        </div>
      </div>
    </div>
    <div className="mt-[18px] flex gap-[20px] pl-[110px] text-[#4b4b4b]">
      <span className="flex h-[22px] w-[100px] items-center justify-center border border-t-white border-r-[#808080] border-b-[#808080] border-l-white bg-[#d1cec5] font-bold">Ok</span>
      <span className="flex h-[22px] w-[100px] items-center justify-center border border-t-white border-r-[#808080] border-b-[#808080] border-l-white bg-[#d1cec5]">Отмена</span>
    </div>
  </div>
);

/* ---------- main area ---------- */
const Main = () => (
  <div className="flex min-w-0 flex-1 flex-col text-[11px]">
    <div className="flex h-[45px] shrink-0 items-center border border-[#dd5a42] bg-gradient-to-b from-[#fde8ca] to-[#f58a74] pl-[20px]">
      <svg width="24" height="22">
        <path d="M12 1.500L22.500 20.500H1.500z" fill="url(#gWarn)" stroke="#cc6a2c" strokeWidth="2" strokeLinejoin="round" />
        <path d="M12 7.500v6.500M12 15.500v2.500" stroke="#d5121e" strokeWidth="2.400" />
      </svg>
      <span className="ml-[20px]">
        Вы давно не меняли свой пароль для доступа к серверу. В целях безопасности настоятельно рекомендуем вам установить новый пароль.
      </span>
      <a className="ml-auto w-[88px] text-[#33589f] underline">Подробнее</a>
      <a className="w-[58px] text-[#33589f] underline">Скрыть</a>
    </div>
    <div className="flex h-[26px] shrink-0 items-center bg-[#b4c8ea] font-bold">
      <span className="flex h-full w-[791px] items-center border-r border-white pb-[2px] pl-[12px]">Доменное имя</span>
      <span className="pb-[2px] pl-[12px]">Владелец</span>
      <svg className="ml-auto" width="15" height="16">
        <rect x=".5" y=".5" width="13" height="12" fill="#fff" stroke="#6d88bf" />
        <path d="M0 1.500h14" stroke="#5a77b2" strokeWidth="3" />
        <path d="M.5 6.500h13M.5 9.500h13M4 3v9M7.500 3v9M11 3v9" stroke="#9db2db" />
        <MiniGear x={11} y={11.5} s={0.9} />
      </svg>
    </div>
    <div className="flex min-h-0 flex-1">
      <div className="min-w-0 flex-1">
        <div className="flex h-[19px] items-center bg-[#5a7db3] text-white">
          <span className="flex h-full w-[791px] items-center border-r border-[#a9bddd] pl-[3px]">casinof.net</span>
          <span className="pl-[3px]">admiralnew777</span>
        </div>
      </div>
      <div className="ml-px flex w-[15px] shrink-0 flex-col items-center justify-between bg-[#f0f0f0] pt-[6px] pb-[6px]">
        <Arrow up c="#a3a3a3" />
        <Arrow c="#a3a3a3" />
      </div>
    </div>
    <div className="flex h-[26px] shrink-0 items-center justify-between bg-[#b4c8ea] pl-[12px] font-bold">
      <span className="pb-[2px]">Выделено - 1</span>
      <svg width="15" height="16">
        <path d="M4 4h11v11H4z" fill="#e6eefc" stroke="#4c6398" />
        <path d="M11 1h4v10" fill="none" stroke="#4c6398" strokeWidth="1.500" />
        <rect x=".5" y="1" width="9.500" height="9" fill="#e9f6e2" stroke="#2f8a2c" strokeWidth="1.400" />
        <path d="M2.500 3l5.500 5.500M8 3L2.500 8.500" stroke="#2f8a2c" strokeWidth="1.700" />
      </svg>
    </div>
  </div>
);

export default function App() {
  return (
    <div className="relative flex h-[1050px] w-[1680px] flex-col overflow-hidden bg-white font-['Noto_Sans',sans-serif]">
      <Defs />
      <TopPanel />
      <div className="flex min-h-0 flex-1">
        <Launcher />
        <div className="flex min-w-0 flex-1 flex-col">
          <div className="flex h-[29px] shrink-0 items-end bg-gradient-to-b from-[#5a574c] to-[#3d3c37] pl-[8px]">
            {tabs.map(([icon, text], i) => (
              <Tab key={i} i={i} icon={icon} text={text} />
            ))}
            <svg className="mb-[5px] ml-[10px]" width="34" height="17">
              <path d="M1.500 1.500Q1.500.5 3 .5H25Q26.500.5 27 1.500L33 15.500H10Q8 15.500 7 14z" fill="#cfcdcb" stroke="#8b8984" strokeWidth=".8" />
            </svg>
            <span className="mb-[9px] ml-[8px] flex h-[17px] w-[30px] items-center justify-center rounded-[2px] border border-[#77756e]">
              <svg width="14" height="14">
                <circle cx="7" cy="7" r="7" fill="#fff" />
                <circle cx="7" cy="5" r="2.300" fill="#444" />
                <path d="M2.500 10.500Q7 6.500 11.500 10.500Q7 14 2.500 10.500z" fill="#444" />
              </svg>
            </span>
          </div>
          <BrowserBars />
          <div className="flex min-h-0 flex-1 flex-col bg-white font-['Liberation_Sans',sans-serif] text-black">
            <PageHeader />
            <div className="flex min-h-0 flex-1">
              <Sidebar />
              <Main />
            </div>
          </div>
        </div>
      </div>
      <div className="font-['Liberation_Sans',sans-serif]">
        <Dialog />
      </div>
    </div>
  );
}
